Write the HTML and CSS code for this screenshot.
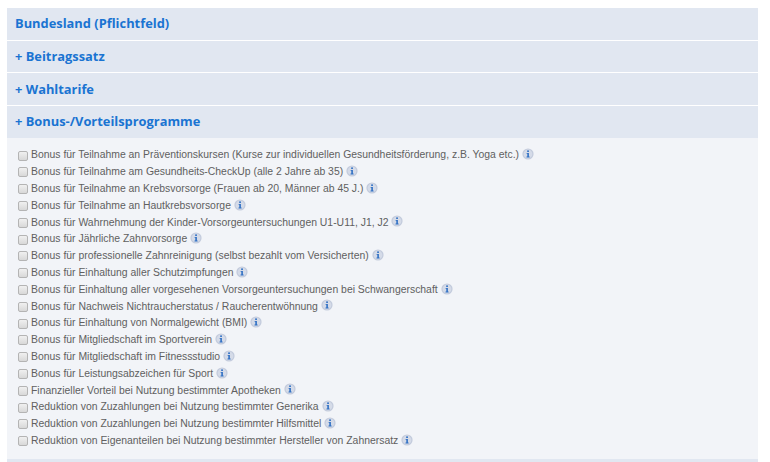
FILE: index.html
```html
<!DOCTYPE html>
<html lang="de">
<head>
<meta charset="utf-8">
<title>Filter</title>
<link rel="stylesheet" href="styles.css">
</head>
<body>
<svg class="defs" width="0" height="0" aria-hidden="true">
  <symbol id="info" viewBox="0 0 12 12">
    <circle cx="6" cy="6" r="5.6" fill="#c3cbdc"/>
    <circle cx="6" cy="6" r="4.4" fill="#d5dbe8"/>
    <rect x="5.2" y="2.4" width="1.7" height="1.6" fill="#2f6fc4"/>
    <path d="M4.6 5h2.3v3.6h.7v.8H4.500v-.8h.8V5.800h-.7z" fill="#2f6fc4"/>
  </symbol>
</svg>
<main class="accordion">
  <h2 class="head">Bundesland (Pflichtfeld)</h2>
  <h2 class="head">+ Beitragssatz</h2>
  <h2 class="head">+ Wahltarife</h2>
  <h2 class="head">+ Bonus-/Vorteilsprogramme</h2>
  <section class="body">
    <label class="row"><input type="checkbox"><span>Bonus für Teilnahme an Präventionskursen (Kurse zur individuellen Gesundheitsförderung, z.B. Yoga etc.)</span><svg class="i"><use href="#info"/></svg></label>
    <label class="row"><input type="checkbox"><span>Bonus für Teilnahme am Gesundheits-CheckUp (alle 2 Jahre ab 35)</span><svg class="i"><use href="#info"/></svg></label>
    <label class="row"><input type="checkbox"><span>Bonus für Teilnahme an Krebsvorsorge (Frauen ab 20, Männer ab 45 J.)</span><svg class="i"><use href="#info"/></svg></label>
    <label class="row"><input type="checkbox"><span>Bonus für Teilnahme an Hautkrebsvorsorge</span><svg class="i"><use href="#info"/></svg></label>
    <label class="row"><input type="checkbox"><span>Bonus für Wahrnehmung der Kinder-Vorsorgeuntersuchungen U1-U11, J1, J2</span><svg class="i"><use href="#info"/></svg></label>
    <label class="row"><input type="checkbox"><span>Bonus für Jährliche Zahnvorsorge</span><svg class="i"><use href="#info"/></svg></label>
    <label class="row"><input type="checkbox"><span>Bonus für professionelle Zahnreinigung (selbst bezahlt vom Versicherten)</span><svg class="i"><use href="#info"/></svg></label>
    <label class="row"><input type="checkbox"><span>Bonus für Einhaltung aller Schutzimpfungen</span><svg class="i"><use href="#info"/></svg></label>
    <label class="row"><input type="checkbox"><span>Bonus für Einhaltung aller vorgesehenen Vorsorgeuntersuchungen bei Schwangerschaft</span><svg class="i"><use href="#info"/></svg></label>
    <label class="row"><input type="checkbox"><span>Bonus für Nachweis Nichtraucherstatus / Raucherentwöhnung</span><svg class="i"><use href="#info"/></svg></label>
    <label class="row"><input type="checkbox"><span>Bonus für Einhaltung von Normalgewicht (BMI)</span><svg class="i"><use href="#info"/></svg></label>
    <label class="row"><input type="checkbox"><span>Bonus für Mitgliedschaft im Sportverein</span><svg class="i"><use href="#info"/></svg></label>
    <label class="row"><input type="checkbox"><span>Bonus für Mitgliedschaft im Fitnessstudio</span><svg class="i"><use href="#info"/></svg></label>
    <label class="row"><input type="checkbox"><span>Bonus für Leistungsabzeichen für Sport</span><svg class="i"><use href="#info"/></svg></label>
    <label class="row"><input type="checkbox"><span>Finanzieller Vorteil bei Nutzung bestimmter Apotheken</span><svg class="i"><use href="#info"/></svg></label>
    <label class="row"><input type="checkbox"><span>Reduktion von Zuzahlungen bei Nutzung bestimmter Generika</span><svg class="i"><use href="#info"/></svg></label>
    <label class="row"><input type="checkbox"><span>Reduktion von Zuzahlungen bei Nutzung bestimmter Hilfsmittel</span><svg class="i"><use href="#info"/></svg></label>
    <label class="row"><input type="checkbox"><span>Reduktion von Eigenanteilen bei Nutzung bestimmter Hersteller von Zahnersatz</span><svg class="i"><use href="#info"/></svg></label>
  </section>
  <div class="foot"></div>
</main>
</body>
</html>
```
FILE: styles.css
```css
html, body { margin: 0; padding: 0; background: #fff; }
body { height: 462px; overflow: hidden; }
.defs { position: absolute; }
.accordion { margin: 8px 12px 0 7px; width: 751px; }
.head {
  margin: 0 0 1px;
  height: 31.7px;
  padding: 0 8px;
  display: flex;
  align-items: center;
  background: #e1e7f1;
  color: #1a74d2;
  font: 700 12.87px/1 "Open Sans", sans-serif;
}
.body {
  margin-top: -1px;
  background: #f2f4f8;
  padding: 9.5px 11px 0;
  height: 321px;
  box-sizing: border-box;
}
.row {
  display: flex;
  align-items: center;
  height: 16.8px;
  font: 10.42px/1 "Liberation Sans", Arial, sans-serif;
  color: #606060;
}
.row input {
  appearance: none;
  margin: 0 3px 0 0;
  width: 10px;
  height: 10px;
  border: 1px solid #b4b4b4;
  border-radius: 2px;
  background: linear-gradient(#f0f0f0, #d8d8d8);
  box-sizing: border-box;
  flex: none;
}
.i { width: 12px; height: 12px; margin: -3px 0 0 3px; flex: none; }
.foot { height: 3px; background: #e1e7f1; }
```
